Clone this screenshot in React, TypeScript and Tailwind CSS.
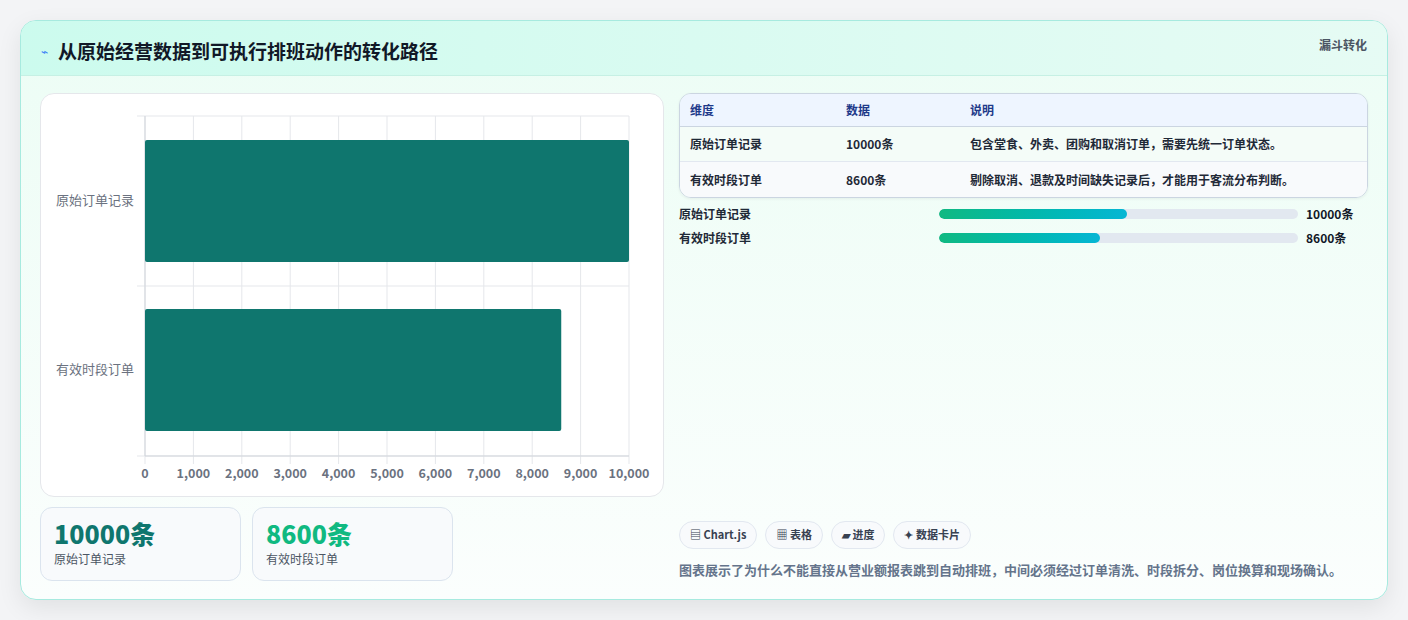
import React from "react";

const F = { fontFamily: '"Noto Sans CJK SC", "Noto Sans", sans-serif' };

function Chart() {
  const x0 = 104, x1 = 588; // plot within svg (svg starts at page x 40)
  const ticks = Array.from({ length: 11 }, (_, i) => i);
  const w = (x1 - x0) / 10;
  return (
    <svg width="622" height="402" className="block">
      {ticks.map((i) => (
        <line key={i} x1={x0 + i * w} x2={x0 + i * w} y1={22} y2={370} stroke="#e5e7eb" strokeWidth="1" />
      ))}
      {[22, 192, 362].map((y) => (
        <line key={y} x1={x0 - 8} x2={x1} y1={y} y2={y} stroke="#e5e7eb" strokeWidth="1" />
      ))}
      <line x1={x0} x2={x0} y1={22} y2={362} stroke="#d1d5db" />
      <line x1={x0} x2={x1} y1={362} y2={362} stroke="#d1d5db" />
      <rect x={x0} y={46} width={x1 - x0} height={122} rx="2" fill="#0f766e" />
      <rect x={x0} y={215} width={(x1 - x0) * 0.86} height={122} rx="2" fill="#0f766e" />
      <text x={93} y={111} textAnchor="end" fontSize="13" fill="#6b7280" style={F}>原始订单记录</text>
      <text x={93} y={280} textAnchor="end" fontSize="13" fill="#6b7280" style={F}>有效时段订单</text>
      {ticks.map((i) => (
        <text key={i} x={x0 + i * w} y={384} textAnchor="middle" fontSize="12.5" fontWeight="700" fill="#6b7280" style={F}>
          {i === 0 ? "0" : (i * 1000).toLocaleString("en-US")}
        </text>
      ))}
    </svg>
  );
}

export default function App() {
  return (
    <div className="w-[1408px] h-[620px] bg-[#f3f4f6] pt-[20px] px-[20px]" style={F}>
      <div className="w-[1368px] h-[580px] rounded-[16px] border border-[#a7eadf] overflow-hidden bg-gradient-to-b from-[#ecfdf5] to-[#fbfefd] shadow-[0_8px_24px_rgba(0,0,0,0.08)] flex flex-col">
        <div className="h-[55px] shrink-0 bg-gradient-to-r from-[#ccfbee] to-[#e6fbf4] border-b border-[#c6f0e4] flex items-start justify-between pl-[20px] pr-[20px]">
          <div className="flex items-center gap-[10px] mt-[16px]">
            <span className="text-[#3b82f6] text-[12px]">⌁</span>
            <span className="text-[19px] font-bold text-[#111827]">从原始经营数据到可执行排班动作的转化路径</span>
          </div>
          <span className="mt-[15px] text-[12px] font-bold text-[#4b5563]">漏斗转化</span>
        </div>
        <div className="flex flex-1 px-[19px] pt-[17px] gap-[15px]">
          <div className="w-[624px] flex flex-col">
            <div className="h-[404px] rounded-[14px] border border-[#e5e7eb] bg-white">
              <Chart />
            </div>
            <div className="flex gap-[11px] mt-[10px]">
              {[
                ["10000条", "原始订单记录", "text-[#0f766e]"],
                ["8600条", "有效时段订单", "text-[#10b981]"],
              ].map(([v, l, c]) => (
                <div key={l} className="w-[201px] h-[74px] rounded-[12px] border border-[#dbe4ee] bg-[#f8fafc] px-[13px] pt-[10px]">
                  <div className={`text-[25px] leading-[30px] font-extrabold ${c}`}>{v}</div>
                  <div className="text-[12px] text-[#4b5563] mt-[2px]">{l}</div>
                </div>
              ))}
            </div>
          </div>
          <div className="flex-1 flex flex-col">
            <div className="rounded-[12px] border border-[#cbd5e1] overflow-hidden text-[12px] shadow-[0_1px_3px_rgba(0,0,0,0.06)]">
              <div className="h-[33px] flex items-center bg-[#eef5ff] border-b border-[#cbd5e1] text-[#1e3a8a] font-bold">
                <span className="w-[166px] pl-[10px]">维度</span>
                <span className="w-[124px]">数据</span>
                <span>说明</span>
              </div>
              <div className="h-[35px] flex items-center bg-[#f4fcf8] border-b border-[#e2e8f0] text-[#1f2937] font-semibold">
                <span className="w-[166px] pl-[10px]">原始订单记录</span>
                <span className="w-[124px]">10000条</span>
                <span>包含堂食、外卖、团购和取消订单，需要先统一订单状态。</span>
              </div>
              <div className="h-[35px] flex items-center bg-[#f8fafc] text-[#1f2937] font-semibold">
                <span className="w-[166px] pl-[10px]">有效时段订单</span>
                <span className="w-[124px]">8600条</span>
                <span>剔除取消、退款及时间缺失记录后，才能用于客流分布判断。</span>
              </div>
            </div>
            <div className="mt-[9px] flex flex-col gap-[10px] text-[12px] font-semibold text-[#1f2937]">
              {[
                ["原始订单记录", "10000条", "52.4%"],
                ["有效时段订单", "8600条", "44.8%"],
              ].map(([l, v, p]) => (
                <div key={l} className="flex items-center h-[14px]">
                  <span className="w-[260px]">{l}</span>
                  <div className="w-[359px] h-[10px] rounded-full bg-[#e2e8f0] overflow-hidden">
                    <div className="h-full rounded-full bg-gradient-to-r from-[#10b981] to-[#06b6d4]" style={{ width: p }} />
                  </div>
                  <span className="ml-[8px] font-bold text-[#111827]">{v}</span>
                </div>
              ))}
            </div>
            <div className="flex-1" />
            <div className="flex gap-[8px] text-[11px] font-bold text-[#374151]">
              {["▤ Chart.js", "▦ 表格", "▰ 进度", "✦ 数据卡片"].map((t) => (
                <span key={t} className="h-[28px] px-[10px] flex items-center rounded-full border border-[#e2e8f0] bg-[#f8fafc]">{t}</span>
              ))}
            </div>
            <div className="mt-[11px] mb-[20px] text-[13px] font-semibold text-[#64748b]">
              图表展示了为什么不能直接从营业额报表跳到自动排班，中间必须经过订单清洗、时段拆分、岗位换算和现场确认。
            </div>
          </div>
        </div>
      </div>
    </div>
  );
}
